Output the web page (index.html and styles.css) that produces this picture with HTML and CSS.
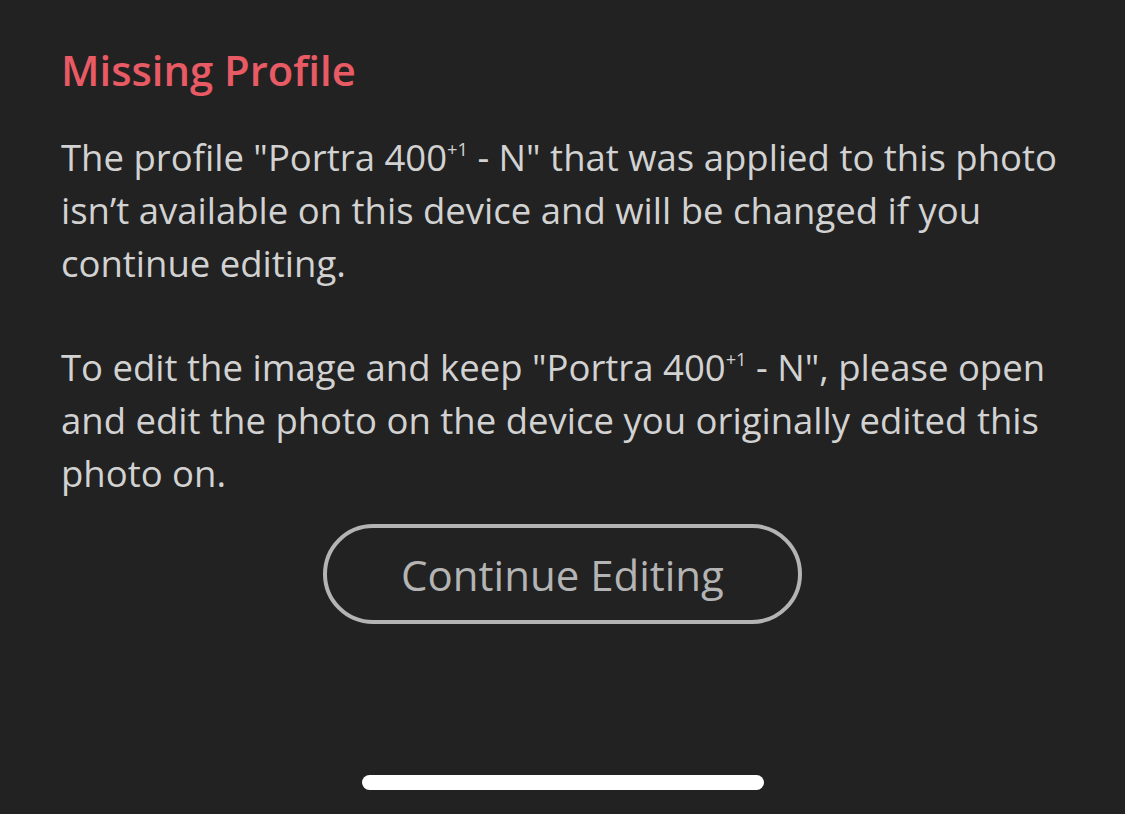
FILE: index.html
```html
<!DOCTYPE html>
<html>
<head>
<meta charset="utf-8">
<link rel="stylesheet" href="styles.css">
</head>
<body>
<div class="screen">
  <h1 class="title">Missing Profile</h1>
  <p class="msg">The profile "Portra 400<sup>+1</sup> - N" that was applied to this photo isn’t available on this device and will be changed if you continue editing.</p>
  <p class="msg second">To edit the image and keep "Portra 400<sup>+1</sup> - N", please open and edit the photo on the device you originally edited this photo on.</p>
  <div class="actions">
    <button class="btn">Continue Editing</button>
  </div>
  <div class="spacer"></div>
  <div class="home-bar"></div>
</div>
</body>
</html>
```
FILE: styles.css
```css
html, body {
  margin: 0;
  padding: 0;
  background: #222222;
}
.screen {
  width: 1125px;
  height: 814px;
  box-sizing: border-box;
  padding: 0 61px;
  display: flex;
  flex-direction: column;
  font-family: "Open Sans", sans-serif;
}
.title {
  margin: 44px 0 0 0;
  font-size: 41.8px;
  line-height: 52px;
  font-weight: 600;
  color: #e85a64;
}
.msg {
  margin: 0;
  font-size: 36.5px;
  line-height: 53px;
  color: #d2d2d2;
}
.msg sup {
  font-size: 0.5em;
  line-height: 0;
  vertical-align: 0.85em;
}
.title + .msg { margin-top: 34.5px; }
.second { margin-top: 51px; }
.actions {
  display: flex;
  justify-content: center;
  margin-top: 24.5px;
}
.btn {
  width: 479px;
  height: 100px;
  border: 4px solid #b4b4b4;
  border-radius: 50px;
  background: transparent;
  color: #b4b4b4;
  font-family: "Open Sans", sans-serif;
  font-size: 42px;
  padding: 0;
}
.spacer { flex: 1; }
.home-bar {
  align-self: center;
  width: 402px;
  height: 15px;
  border-radius: 8px;
  background: #ffffff;
  margin-bottom: 24px;
}
```
